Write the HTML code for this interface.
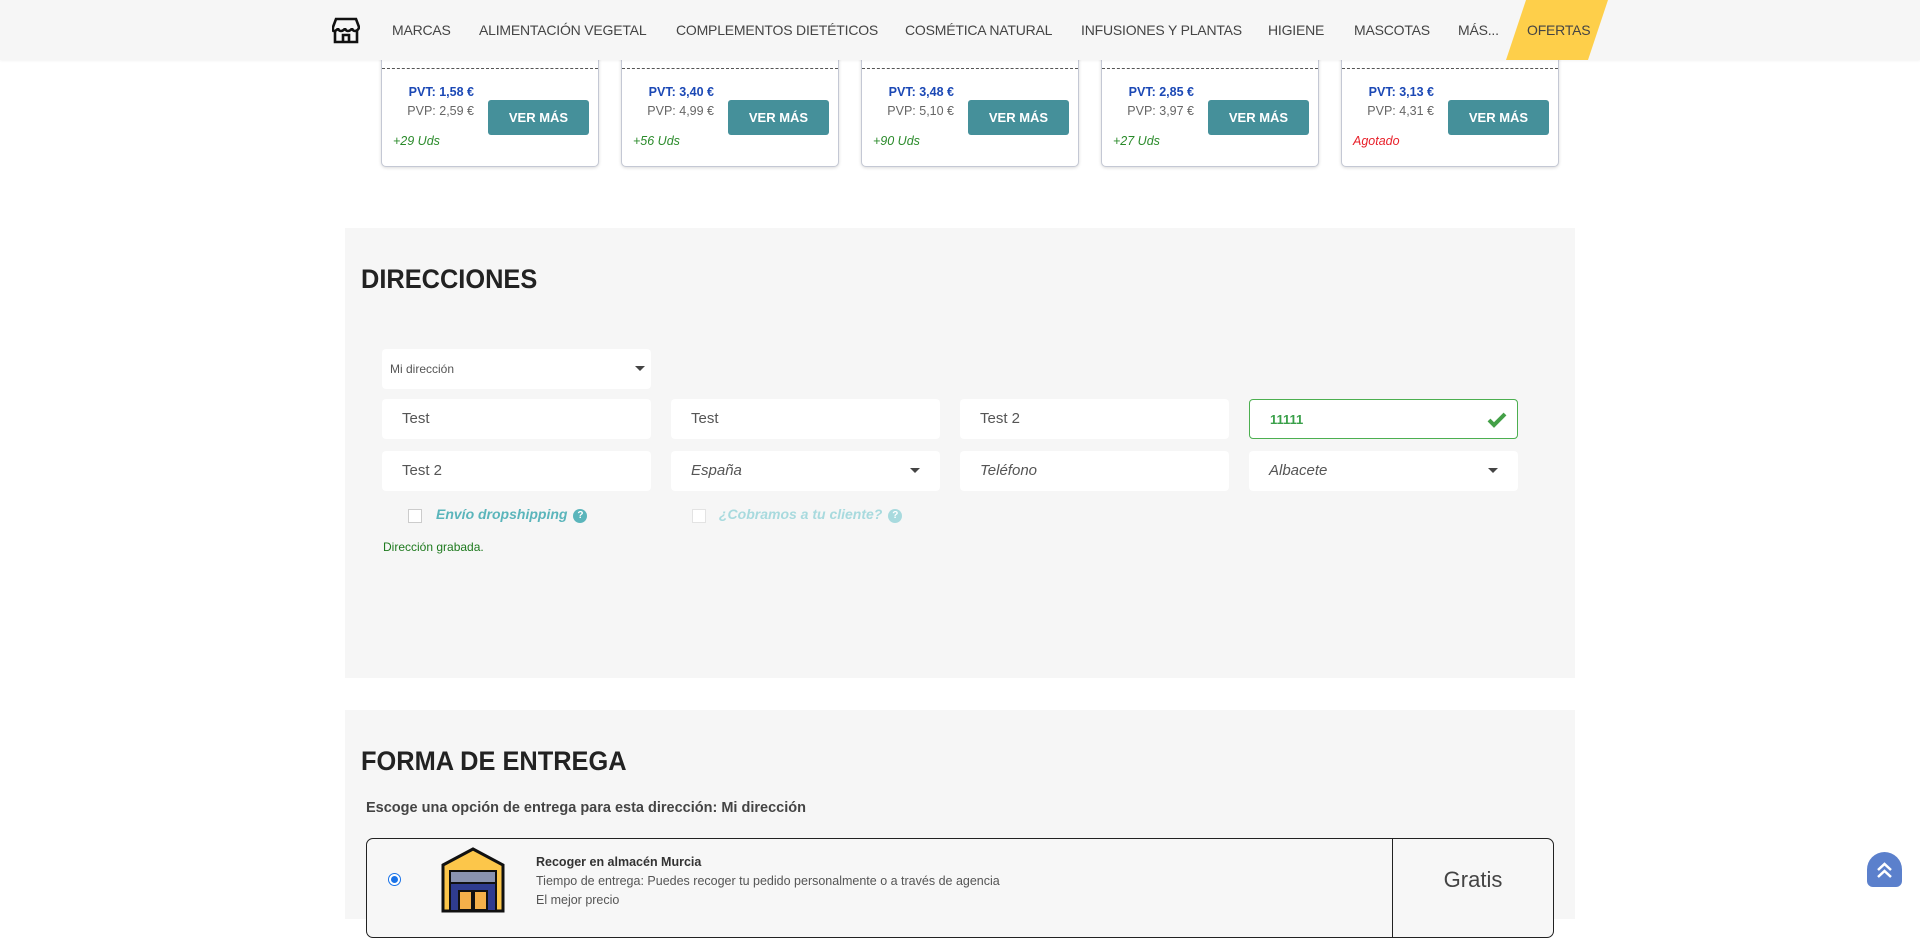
<!DOCTYPE html>
<html><head><meta charset="utf-8"><style>
*{box-sizing:border-box;margin:0;padding:0}
body{width:1920px;height:919px;overflow:hidden;background:#fff;font-family:"Liberation Sans",sans-serif;position:relative;color:#555}
.abs{position:absolute}
.nav{position:absolute;left:0;top:0;width:1920px;height:60px;background:#f6f6f6;z-index:5;box-shadow:0 1px 2px rgba(0,0,0,.05)}
.nav span{position:absolute;top:22px;font-size:14px;letter-spacing:-0.2px;color:#444;white-space:nowrap}
.card{position:absolute;top:40px;width:218px;height:127px;background:#fff;border:1px solid #c4c8d4;border-top:none;border-radius:0 0 5px 5px;box-shadow:0 1px 3px rgba(0,0,0,.15)}
.card .dash{position:absolute;left:0;right:0;top:28px;border-top:1px dashed #555}
.card .pvt{position:absolute;left:0;width:92px;text-align:right;top:45px;font-size:12.5px;font-weight:bold;color:#1b48b5}
.card .pvp{position:absolute;left:0;width:92px;text-align:right;top:64px;font-size:12.5px;color:#666}
.card .btn{position:absolute;left:106px;top:60px;width:101px;height:35px;background:#45909a;color:#fff;font-weight:bold;font-size:13px;text-align:center;line-height:35px;border-radius:3px}
.card .uds{position:absolute;left:11px;top:94px;font-size:12.5px;font-style:italic;color:#2a8a2a}
.sec{position:absolute;left:345px;width:1230px;background:#f6f6f6}
h2{position:absolute;font-size:27px;font-weight:bold;color:#222;left:16px;transform:scaleX(0.94);transform-origin:left;white-space:nowrap}
.in{position:absolute;width:269px;height:40px;background:#fff;border-radius:4px;font-size:15px;color:#555;padding-left:20px;line-height:40px}
.it{font-style:italic}
.car{position:absolute;right:20px;top:17px;width:0;height:0;border-left:5px solid transparent;border-right:5px solid transparent;border-top:5px solid #444}
.cb{position:absolute;width:14px;height:14px;border:1px solid #ccc;background:#fff}
.q{display:inline-block;width:14px;height:14px;border-radius:50%;color:#fff;font-size:10px;text-align:center;line-height:14px;font-style:normal;font-weight:bold;vertical-align:1px;margin-left:6px}
</style></head><body>
<div class="nav">
<svg class="abs" style="left:332px;top:17px" width="28" height="27" viewBox="0 0 28 27" fill="none" stroke="#111" stroke-width="2.6"><path d="M4 2h20l3 8c0 2-2 4-4 4s-3-2-3-3c0 1-2 3-4 3s-3-2-3-3c0 1-2 3-4 3s-3-2-3-3c0 1-2 3-4 3S1 12 1 10z"/><path d="M3 13v12h22V13"/><path d="M11 25v-7h6v7"/></svg>
<span style="left:392px">MARCAS</span>
<span style="left:479px">ALIMENTACIÓN VEGETAL</span>
<span style="left:676px">COMPLEMENTOS DIETÉTICOS</span>
<span style="left:905px">COSMÉTICA NATURAL</span>
<span style="left:1081px">INFUSIONES Y PLANTAS</span>
<span style="left:1268px">HIGIENE</span>
<span style="left:1354px">MASCOTAS</span>
<span style="left:1458px">MÁS...</span>
<svg class="abs" style="left:1506px;top:0" width="102" height="60"><polygon points="20,0 102,0 82,60 0,60" fill="#fecf4a"/></svg>
<span style="left:1527px">OFERTAS</span>
</div>

<div class="card" style="left:381px"><div class="dash"></div><div class="pvt">PVT: 1,58 €</div><div class="pvp">PVP: 2,59 €</div><div class="btn">VER MÁS</div><div class="uds">+29 Uds</div></div>
<div class="card" style="left:621px"><div class="dash"></div><div class="pvt">PVT: 3,40 €</div><div class="pvp">PVP: 4,99 €</div><div class="btn">VER MÁS</div><div class="uds">+56 Uds</div></div>
<div class="card" style="left:861px"><div class="dash"></div><div class="pvt">PVT: 3,48 €</div><div class="pvp">PVP: 5,10 €</div><div class="btn">VER MÁS</div><div class="uds">+90 Uds</div></div>
<div class="card" style="left:1101px"><div class="dash"></div><div class="pvt">PVT: 2,85 €</div><div class="pvp">PVP: 3,97 €</div><div class="btn">VER MÁS</div><div class="uds">+27 Uds</div></div>
<div class="card" style="left:1341px"><div class="dash"></div><div class="pvt">PVT: 3,13 €</div><div class="pvp">PVP: 4,31 €</div><div class="btn">VER MÁS</div><div class="uds" style="color:#e8202a">Agotado</div></div>

<div class="sec" style="top:228px;height:450px">
<h2 style="top:36px">DIRECCIONES</h2>
</div>
<div class="in" style="left:382px;top:349px;height:40px;font-size:12px;padding-left:8px">Mi dirección<div class="car" style="right:6px"></div></div>
<div class="in" style="left:382px;top:399px">Test</div>
<div class="in" style="left:671px;top:399px">Test</div>
<div class="in" style="left:960px;top:399px">Test 2</div>
<div class="in" style="left:1249px;top:399px;border:1px solid #4caf50;color:#3aa04a;font-weight:bold;font-size:13px">11111
<svg class="abs" style="right:10px;top:12px" width="20" height="16" viewBox="0 0 20 16"><path d="M2 8l5 5L18 2" fill="none" stroke="#43a047" stroke-width="4"/></svg></div>
<div class="in" style="left:382px;top:451px">Test 2</div>
<div class="in it" style="left:671px;top:451px">España<div class="car"></div></div>
<div class="in it" style="left:960px;top:451px">Teléfono</div>
<div class="in it" style="left:1249px;top:451px">Albacete<div class="car"></div></div>
<div class="cb" style="left:408px;top:509px"></div>
<div class="abs" style="left:436px;top:506px;font-size:14px;font-style:italic;font-weight:bold;color:#5ab5bb">Envío dropshipping<span class="q" style="background:#5ab5bb">?</span></div>
<div class="cb" style="left:692px;top:509px;border-color:#e3e3e3"></div>
<div class="abs" style="left:719px;top:506px;font-size:14px;font-style:italic;font-weight:bold;color:#a8dade">¿Cobramos a tu cliente?<span class="q" style="background:#a8dade">?</span></div>
<div class="abs" style="left:383px;top:540px;font-size:12px;color:#1e7a1e">Dirección grabada.</div>

<div class="sec" style="top:710px;height:209px">
<h2 style="top:36px">FORMA DE ENTREGA</h2>
<div class="abs" style="left:21px;top:90px;font-size:14.5px;font-weight:bold;color:#444">Escoge una opción de entrega para esta dirección: Mi dirección</div>
</div>
<div class="abs" style="left:366px;top:838px;width:1188px;height:100px;border:1px solid #222;border-radius:7px;background:#f7f7f7">
<div class="abs" style="left:1025px;top:0;bottom:0;border-left:1px solid #222"></div>
<div class="abs" style="left:1026px;right:0;top:28px;text-align:center;font-size:22px;color:#444">Gratis</div>
<div class="abs" style="left:21px;top:34px;width:13px;height:13px;border-radius:50%;border:1px solid #1a73e8;background:#fff"><div style="margin:2px;width:7px;height:7px;border-radius:50%;background:#1a73e8"></div></div>
<svg class="abs" style="left:74px;top:8px" width="64" height="66" viewBox="0 0 64 66"><polygon points="2,18 32,2 62,18 62,64 2,64" fill="#fcc64a" stroke="#111" stroke-width="3"/><rect x="9" y="24" width="46" height="40" fill="#2f3c8f" stroke="#111" stroke-width="2"/><rect x="9" y="24" width="46" height="12" fill="#8a93b0" stroke="#111" stroke-width="2"/><rect x="18" y="44" width="13" height="19" fill="#f4b04a" stroke="#111" stroke-width="2"/><rect x="33" y="44" width="13" height="19" fill="#f4b04a" stroke="#111" stroke-width="2"/></svg>
<div class="abs" style="left:169px;top:14px;font-size:12.5px;color:#333;font-weight:bold;line-height:19px">Recoger en almacén Murcia<br><span style="font-weight:normal;color:#555">Tiempo de entrega: Puedes recoger tu pedido personalmente o a través de agencia<br>El mejor precio</span></div>
</div>
<div class="abs" style="left:1867px;top:852px;width:35px;height:35px;border-radius:50% 50% 6px 6px;background:#5b80cc"><svg width="35" height="35" viewBox="0 0 35 35" fill="none" stroke="#fff" stroke-width="2.5"><path d="M11 18l6.5-6 6.5 6M11 25l6.5-6 6.5 6"/></svg></div>
</body></html>
